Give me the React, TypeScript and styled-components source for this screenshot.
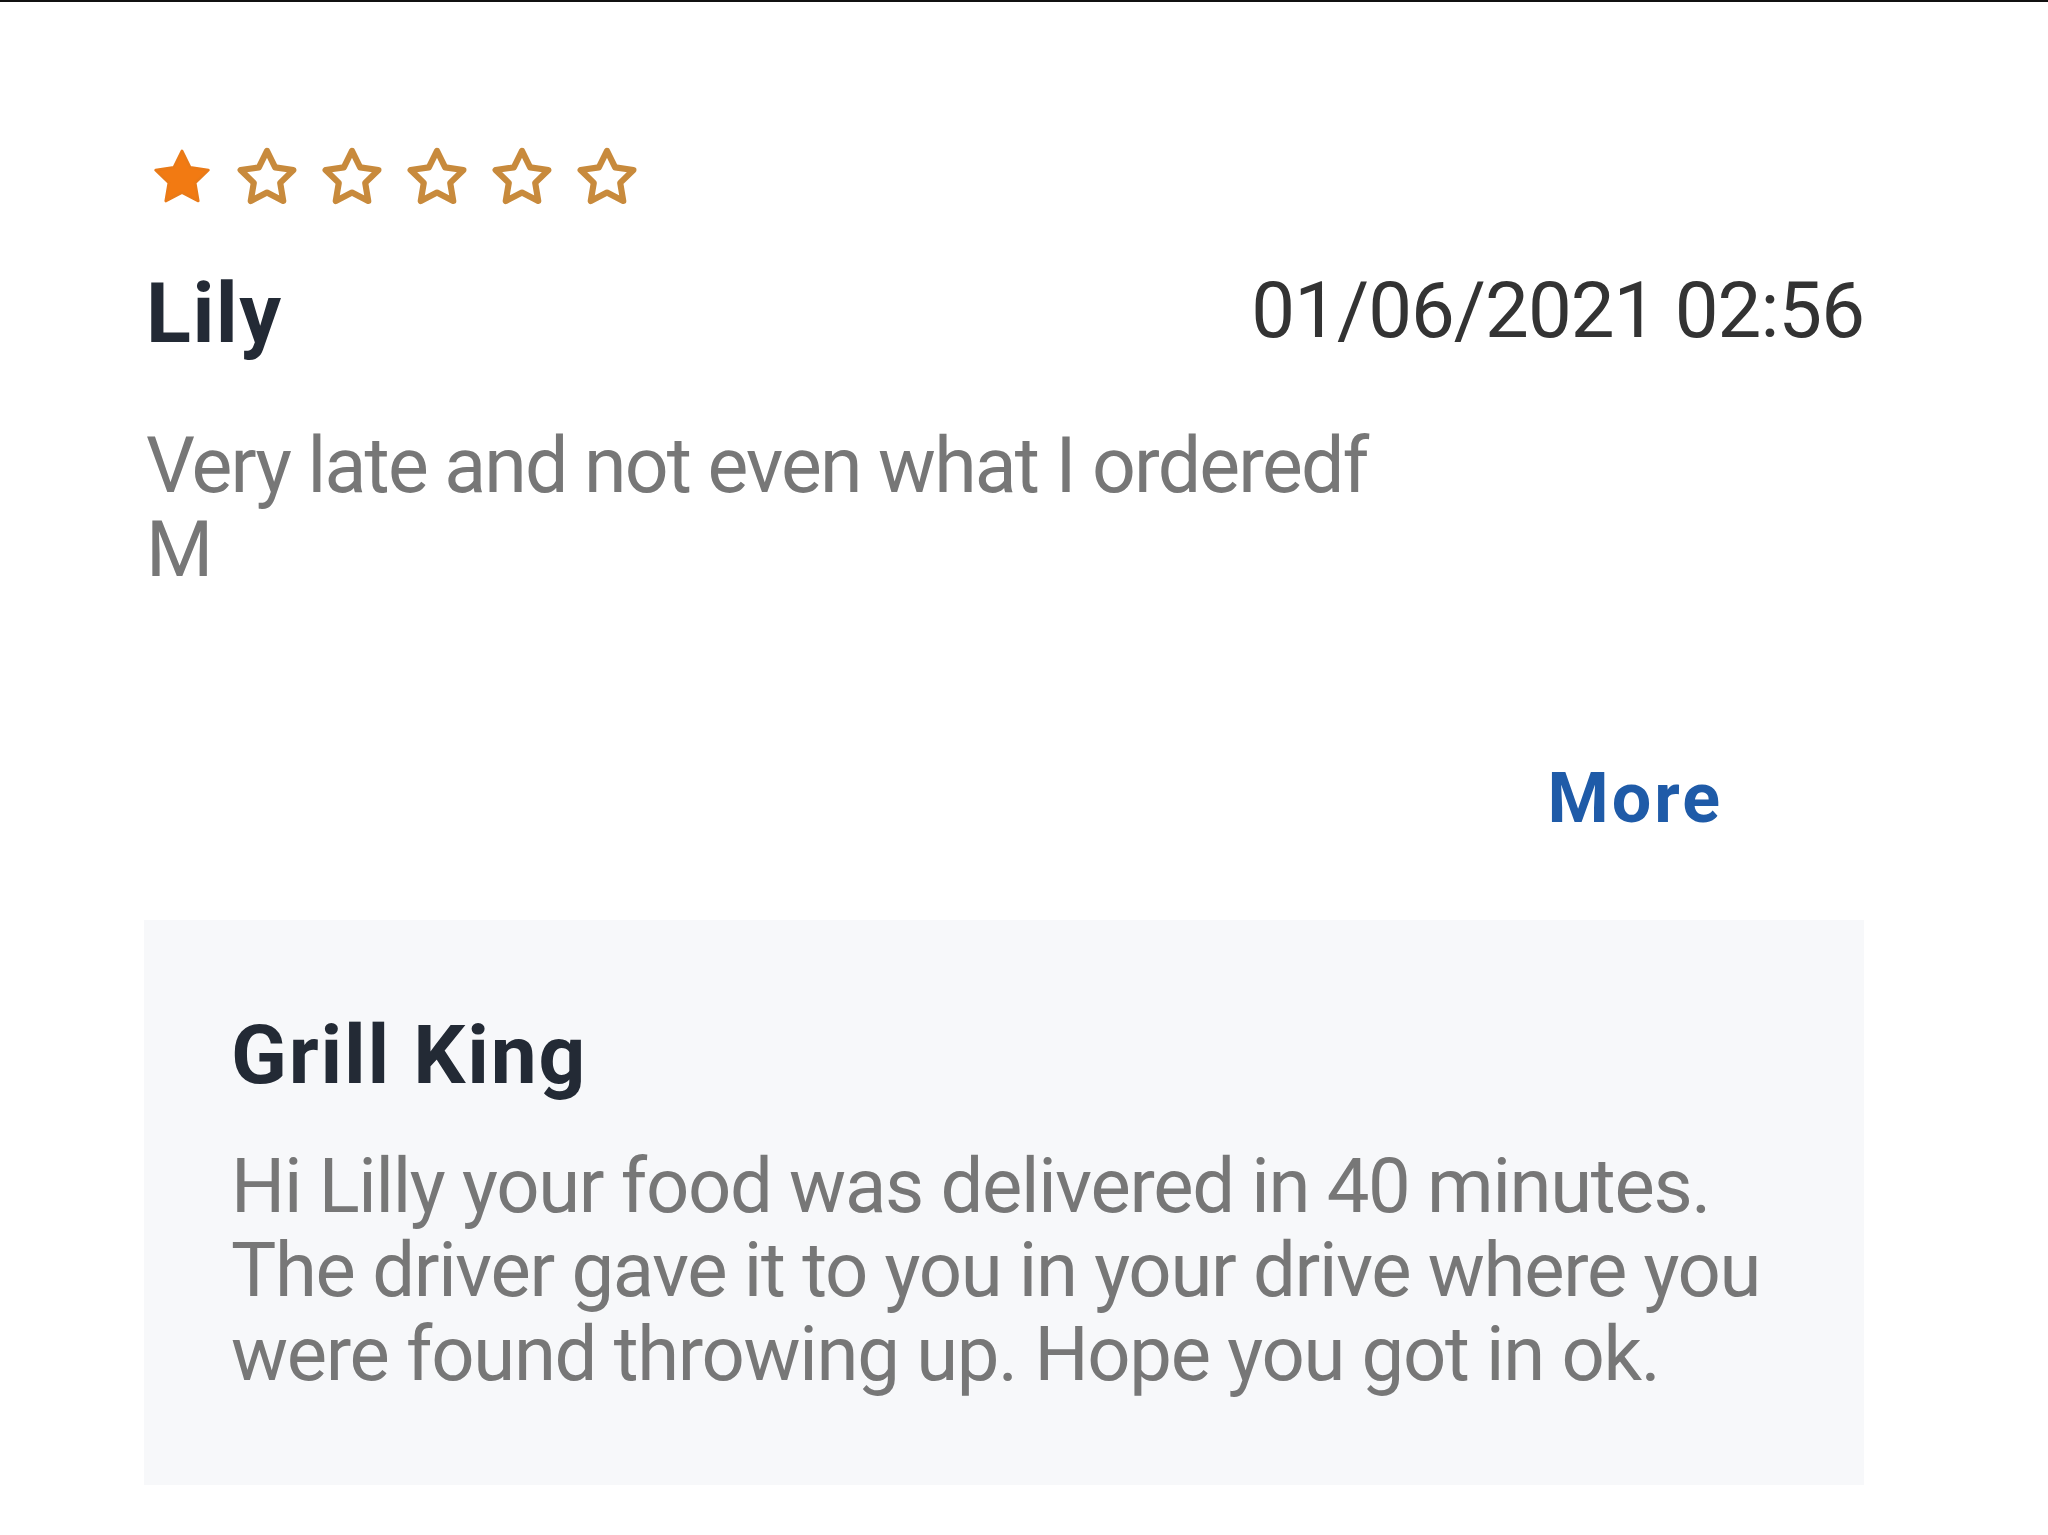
import { createGlobalStyle, styled } from 'styled-components';

const GlobalStyle = createGlobalStyle`
    html, body {
        margin: 0;
        padding: 0;
        background: #ffffff;
    }
    body {
        font-family: Roboto, 'Noto Sans', Arial, sans-serif;
    }
`;

interface StarProps {
    filled: boolean;
}

const STAR_POINTS = '12,2.2 15.05,8.4 21.9,9.4 16.95,14.2 18.1,21 12,17.8 5.9,21 7.05,14.2 2.1,9.4 8.95,8.4';

const Star = ({ filled }: StarProps) => (
    <StarIcon viewBox="0 0 24 24">
        <polygon
            points={STAR_POINTS}
            fill={filled ? '#f27a12' : 'none'}
            stroke={filled ? '#e97a18' : '#c88a3c'}
            strokeWidth={filled ? 1 : 2.3}
            strokeLinejoin="round"
        />
    </StarIcon>
);

export default function App() {
    const rating = 1;

    return (
        <Frame>
            <GlobalStyle />
            <Stars>
                {[0, 1, 2, 3, 4, 5].map((i) => (
                    <Star key={i} filled={i < rating} />
                ))}
            </Stars>

            <HeaderRow>
                <Name>Lily</Name>
                <DateText>01/06/2021 02:56</DateText>
            </HeaderRow>

            <ReviewText>
                Very late and not even what I orderedf
                <br />M
            </ReviewText>

            <MoreRow>
                <MoreLink>More</MoreLink>
            </MoreRow>

            <ReplyBox>
                <ReplyName>Grill King</ReplyName>
                <ReplyText>
                    Hi Lilly your food was delivered in 40 minutes. The driver gave it to you in your drive
                    where you were found throwing up. Hope you got in ok.
                </ReplyText>
            </ReplyBox>
        </Frame>
    );
}

const Frame = styled.div`
    display: flex;
    flex-direction: column;
    min-height: 1533px;
    border-top: 2px solid #111;
    padding: 143px 184px 0 146px;
    box-sizing: border-box;
`;

const Stars = styled.div`
    display: flex;
    gap: 21px;
    height: 63px;
    margin-left: 4px;
    margin-bottom: 64px;
`;

const StarIcon = styled.svg`
    width: 64px;
    height: 64px;
    flex-shrink: 0;
`;

const HeaderRow = styled.div`
    display: flex;
    justify-content: space-between;
    align-items: flex-start;
`;

const Name = styled.div`
    font-size: 83px;
    line-height: 83px;
    font-weight: 700;
    letter-spacing: 1.5px;
    color: #232a35;
`;

const DateText = styled.div`
    font-size: 78px;
    line-height: 77px;
    font-weight: 400;
    letter-spacing: -1px;
    color: #333333;
`;

const ReviewText = styled.div`
    margin-top: 69px;
    font-size: 77px;
    line-height: 84px;
    letter-spacing: -1.8px;
    color: #777777;
`;

const MoreRow = styled.div`
    display: flex;
    justify-content: flex-end;
    margin-top: 171px;
    padding-right: 141px;
`;

const MoreLink = styled.div`
    font-size: 70px;
    line-height: 70px;
    font-weight: 700;
    letter-spacing: 3px;
    color: #1f5ba8;
    cursor: pointer;
`;

const ReplyBox = styled.div`
    margin-top: 87px;
    margin-left: -2px;
    background: #f7f8fa;
    padding: 94px 87px 89px 87px;
`;

const ReplyName = styled.div`
    font-size: 82px;
    line-height: 82px;
    font-weight: 700;
    letter-spacing: 1.8px;
    color: #232a35;
`;

const ReplyText = styled.div`
    margin-top: 48px;
    font-size: 76px;
    line-height: 84px;
    letter-spacing: -1.3px;
    color: #777777;
`;
